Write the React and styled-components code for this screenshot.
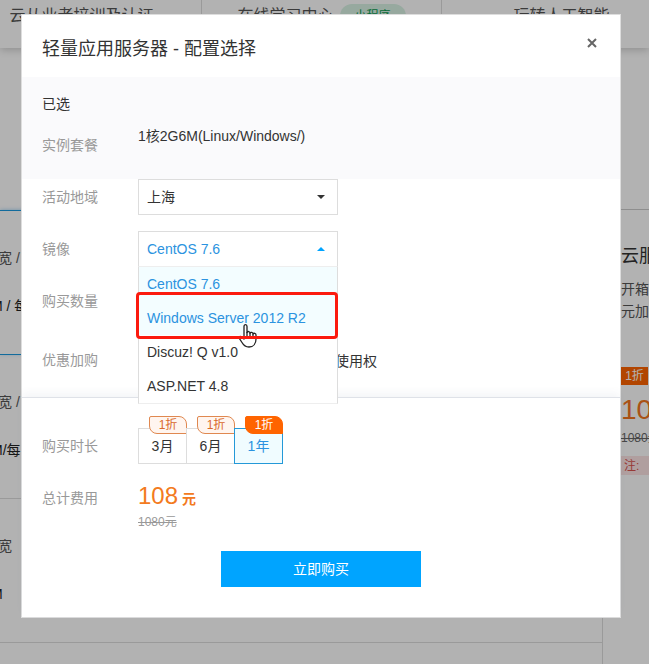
import { useState } from 'react'
import styled, { createGlobalStyle, css } from 'styled-components'

const GlobalStyle = createGlobalStyle`
  * {
    box-sizing: border-box;
  }

  body {
    margin: 0;
    overflow: hidden;
    background-color: #fff;
    color: #333;
    font-family: 'Liberation Sans', 'Noto Sans CJK SC', sans-serif;
    font-size: 14px;
  }

  button,
  select {
    font: inherit;
    border-radius: 0;
  }
`

const Page = styled.div`
  display: flex;
  flex-direction: column;
  height: 100vh;
  overflow: hidden;
`

const Nav = styled.nav`
  display: grid;
  flex: none;
  grid-template-columns: repeat(3, 240px);
  justify-content: center;
  height: 48px;
  padding-right: 5px;
  box-shadow: 0 2px 8px rgba(0, 0, 0, 0.2);
`

const NavLink = styled.a`
  display: flex;
  justify-content: center;
  gap: 6px;
  padding-top: 4px;
  border-right: 1px solid #ddd;
  color: #555;
  font-size: 16px;
  line-height: 24px;
  text-decoration: none;
  white-space: nowrap;
`

const Pill = styled.span`
  height: 24px;
  padding: 0 15px;
  border-radius: 12px;
  background-color: #d8f2e4;
  color: #0a9a50;
  font-size: 12px;
  line-height: 24px;
`

const Content = styled.main`
  display: grid;
  flex: 1;
  grid-template-columns: 1fr 46px;
  margin-top: 161px;
`

const Plans = styled.div`
  padding-top: 1px;
  border-right: 1px solid #ddd;
`

const Plan = styled.div`
  height: 144px;
  padding-top: 23px;
  border-top: 1px solid ${(props) => (props.$blue ? '#1a9ae0' : '#ddd')};
  box-shadow: ${(props) => (props.$active ? '0 0 4px rgba(0, 130, 220, 0.4)' : 'none')};
`

const PlanLine = styled.div`
  margin-left: ${(props) => (props.$strong ? '-9px' : '-2px')};
  color: ${(props) => (props.$strong ? '#222' : '#555')};
  line-height: 48px;
`

const Aside = styled.aside`
  padding: 32px 0 0 18px;
  border-top: 1px solid #ccc;
  overflow: hidden;
  white-space: nowrap;
`

const AsideTitle = styled.h3`
  margin: 0 0 8px;
  font-size: 18px;
  font-weight: 400;
  line-height: 28px;
`

const AsideText = styled.p`
  margin: 0;
  color: #555;
  line-height: 22px;
`

const Tag = styled.div`
  width: 27px;
  margin-top: 45px;
  background-color: #ff6400;
  color: #fff;
  font-size: 12px;
  line-height: 18px;
  text-align: center;
`

const AsidePrice = styled.div`
  height: 47px;
  color: #f37620;
  font-size: 28px;
  line-height: 50px;
`

const AsideOld = styled.del`
  display: block;
  color: #666;
  font-size: 12px;
  line-height: 12px;
`

const Note = styled.div`
  margin-top: 12px;
  padding: 1px 0 0 3px;
  background-color: #fce4e4;
  color: #d9534f;
  font-size: 12px;
  line-height: 18px;
`

const Overlay = styled.div`
  position: fixed;
  inset: 0;
  display: flex;
  align-items: flex-start;
  padding: 14px 28px 46px 21px;
  background-color: rgba(0, 0, 0, 0.3);
`

const Dialog = styled.section`
  flex: 1;
  border: 1px solid #ddd;
  background-color: #fff;
`

const Header = styled.header`
  display: flex;
  align-items: center;
  justify-content: space-between;
  height: 62px;
  padding: 2px 20px 0;
`

const Title = styled.h2`
  margin: 0;
  font-size: 18px;
  font-weight: 400;
`

const Close = styled.button`
  display: flex;
  margin-bottom: 8px;
  padding: 3px;
  border: 0;
  background: none;
  color: #666;
`

const Summary = styled.div`
  height: 102px;
  padding: 17px 20px 0;
  background-color: #fafafc;
`

const SummaryTitle = styled.div`
  margin-bottom: 10px;
  line-height: 20px;
`

const Body = styled.div`
  display: flex;
  flex-direction: column;
  gap: 16px;
  padding: 0 20px 12px;
`

const Row = styled.div`
  display: grid;
  grid-template-columns: 96px 1fr;
  align-items: ${(props) => (props.$top ? 'start' : 'center')};
  min-height: ${(props) => (props.$tall ? '50px' : '36px')};
`

const Label = styled.label`
  color: #999;
  line-height: 36px;
`

const SummaryLabel = styled.div`
  padding-top: 9px;
  color: #999;
  line-height: 24px;
`

const SummaryValue = styled.div`
  line-height: 24px;
`

const SelectBox = styled.div`
  position: relative;
  width: 200px;
  height: 36px;
`

const Select = styled.select`
  width: 100%;
  height: 100%;
  padding: 0 8px;
  border: 1px solid #ddd;
  outline: 0;
  appearance: none;
  background-color: #fff;
  color: ${(props) => (props.$open ? '#2b93e0' : '#333')};
`

const Arrow = styled.svg`
  position: absolute;
  top: 16px;
  right: 13px;
  pointer-events: none;
  fill: ${(props) => (props.$up ? '#00a4ff' : '#333')};
`

const Menu = styled.ul`
  position: absolute;
  z-index: 2;
  top: 35px;
  left: 0;
  width: 100%;
  margin: 0;
  padding: 0;
  border: 1px solid #ddd;
  border-top-color: #eee;
  border-bottom-color: #eee;
  background-color: #fff;
  list-style: none;
`

const Option = styled.li`
  padding: 0 8px;
  line-height: 34px;
  ${(props) =>
    props.$active &&
    css`
      background-color: #f3fdff;
      color: #2b93e0;
    `}
`

const Highlight = styled.div`
  position: absolute;
  top: 25px;
  left: -3px;
  width: 202px;
  height: 47px;
  border: 3px solid #fb1a0e;
  border-radius: 4px;
`

const Pointer = styled.svg`
  position: absolute;
  top: 56px;
  left: 99px;
`

const Extra = styled.span`
  padding-left: 197px;
`

const Footer = styled.footer`
  display: flex;
  flex-direction: column;
  gap: 16px;
  padding: 30px 20px;
  border-top: 1px solid #dfe2e8;
  box-shadow: 0 -4px 8px rgba(60, 80, 120, 0.06);
`

const Durations = styled.div`
  display: flex;
`

const Duration = styled.button`
  position: relative;
  z-index: ${(props) => (props.$active ? 1 : 0)};
  width: 49px;
  height: 36px;
  margin-right: -1px;
  padding: 0 0 2px;
  border: 1px solid ${(props) => (props.$active ? '#2499d8' : '#ddd')};
  background-color: ${(props) => (props.$active ? '#f0fcff' : '#fff')};
  color: ${(props) => (props.$active ? '#2b93e0' : '#333')};
`

const Badge = styled.span`
  position: absolute;
  top: -13px;
  right: -1px;
  width: 38px;
  height: 18px;
  border: 1px solid ${(props) => (props.$active ? '#ff6400' : '#e08850')};
  border-radius: 2px 8px 0 8px;
  background-color: ${(props) => (props.$active ? '#ff6400' : '#fff5ef')};
  color: ${(props) => (props.$active ? '#fff' : '#d9692c')};
  font-size: 12px;
  line-height: 16px;
`

const Price = styled.div`
  height: 32px;
  color: #f37a20;
  font-size: 24px;
  line-height: 32px;
`

const Unit = styled.span`
  margin-left: 4px;
  font-size: 14px;
  font-weight: 700;
`

const OldPrice = styled.del`
  display: block;
  color: #999;
  font-size: 12px;
  line-height: 20px;
`

const BuyButton = styled.button`
  align-self: center;
  width: 200px;
  height: 36px;
  margin-top: 3px;
  padding: 0 0 2px;
  border: 0;
  background-color: #00a4ff;
  color: #fff;
`

const images = ['CentOS 7.6', 'Windows Server 2012 R2', 'Discuz! Q v1.0', 'ASP.NET 4.8']
const durations = ['3月', '6月', '1年']

const App = () => {
  const [image, setImage] = useState(images[0])
  const [hovered, setHovered] = useState(images[1])
  const [duration, setDuration] = useState('1年')

  return (
    <>
      <GlobalStyle />
      <Page>
        <Nav>
          <NavLink href="#training">云从业者培训及认证</NavLink>
          <NavLink href="#learning">
            在线学习中心<Pill>小程序</Pill>
          </NavLink>
          <NavLink href="#ai">玩转人工智能</NavLink>
        </Nav>
        <Content>
          <Plans>
            <Plan $blue $active>
              <PlanLine>宽 /</PlanLine>
              <PlanLine $strong>M / 每</PlanLine>
            </Plan>
            <Plan $blue>
              <PlanLine>宽 /</PlanLine>
              <PlanLine $strong>M/每</PlanLine>
            </Plan>
            <Plan>
              <PlanLine>宽</PlanLine>
              <PlanLine $strong>M</PlanLine>
            </Plan>
            <Plan />
          </Plans>
          <Aside>
            <AsideTitle>云服</AsideTitle>
            <AsideText>开箱</AsideText>
            <AsideText>元加</AsideText>
            <Tag>1折</Tag>
            <AsidePrice>10</AsidePrice>
            <AsideOld>1080元</AsideOld>
            <Note>注:</Note>
          </Aside>
        </Content>
      </Page>
      <Overlay>
        <Dialog role="dialog" aria-labelledby="title">
          <Header>
            <Title id="title">轻量应用服务器 - 配置选择</Title>
            <Close aria-label="关闭">
              <svg width="10" height="10" viewBox="0 0 10 10" stroke="currentColor" strokeWidth="2">
                <path d="M1 1l8 8M9 1L1 9" />
              </svg>
            </Close>
          </Header>
          <Summary>
            <SummaryTitle>已选</SummaryTitle>
            <Row $top>
              <SummaryLabel>实例套餐</SummaryLabel>
              <SummaryValue>1核2G6M(Linux/Windows/)</SummaryValue>
            </Row>
          </Summary>
          <Body>
            <Row>
              <Label htmlFor="region">活动地域</Label>
              <SelectBox>
                <Select id="region">
                  <option>上海</option>
                </Select>
                <Arrow width="8" height="4" viewBox="0 0 8 4">
                  <path d="M0 0h8L4 4z" />
                </Arrow>
              </SelectBox>
            </Row>
            <Row>
              <Label htmlFor="image">镜像</Label>
              <SelectBox>
                <Select id="image" $open value={image} onChange={(e) => setImage(e.target.value)}>
                  {images.map((name) => (
                    <option key={name}>{name}</option>
                  ))}
                </Select>
                <Arrow $up width="8" height="4" viewBox="0 0 8 4">
                  <path d="M0 4h8L4 0z" />
                </Arrow>
                <Menu role="listbox">
                  {images.map((name) => (
                    <Option
                      key={name}
                      role="option"
                      aria-selected={name === image}
                      $active={name === image || name === hovered}
                      onMouseEnter={() => setHovered(name)}
                      onClick={() => setImage(name)}
                    >
                      {name}
                    </Option>
                  ))}
                  <Pointer width="20" height="26" viewBox="0 0 20 26">
                    <path
                      d="M6 14.500V3.500C6 1 9 1 9 3.500V9.500c.6-1.500 3-1.300 3 .7.600-1.400 3-1.200 3 .8.600-1.200 3-1 3 1V16c0 4.500-2.500 8-7 8-4 0-5.500-1.800-7-4.500L1.300 15.400c-.8-1.600 1-2.700 2.400-1.500L6 16z"
                      fill="#fff"
                      stroke="#222"
                      strokeWidth="1.300"
                      strokeLinejoin="round"
                    />
                    <path d="M9 9v4.500M12 10v4M15 11v3.500" stroke="#222" strokeWidth="1.300" />
                  </Pointer>
                  <Highlight />
                </Menu>
              </SelectBox>
            </Row>
            <Row>
              <Label as="span">购买数量</Label>
            </Row>
            <Row $tall>
              <Label as="span">优惠加购</Label>
              <Extra>使用权</Extra>
            </Row>
          </Body>
          <Footer>
            <Row>
              <Label as="span">购买时长</Label>
              <Durations>
                {durations.map((name) => (
                  <Duration
                    key={name}
                    $active={name === duration}
                    aria-pressed={name === duration}
                    onClick={() => setDuration(name)}
                  >
                    {name}
                    <Badge $active={name === duration}>1折</Badge>
                  </Duration>
                ))}
              </Durations>
            </Row>
            <Row $top>
              <Label as="span">总计费用</Label>
              <div>
                <Price>
                  108<Unit>元</Unit>
                </Price>
                <OldPrice>1080元</OldPrice>
              </div>
            </Row>
            <BuyButton>立即购买</BuyButton>
          </Footer>
        </Dialog>
      </Overlay>
    </>
  )
}

export default App
